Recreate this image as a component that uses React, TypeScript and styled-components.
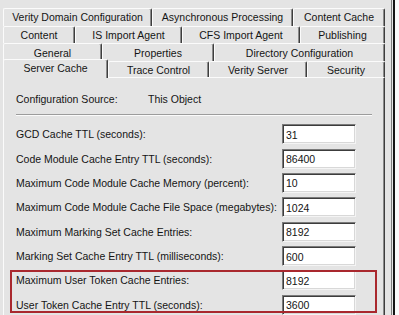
import React from "react";
import styled, { createGlobalStyle } from "styled-components";

const Global = createGlobalStyle`
  html, body { margin: 0; padding: 0; background: #e4e4e4; }
  body { font-family: "Liberation Sans", Arial, sans-serif; font-size: 10.5px; color: #141414; }
  * { box-sizing: border-box; }
`;

const Screen = styled.div`
  width: 399px;
  height: 315px;
  display: flex;
  overflow: hidden;
  background: #e4e4e4;
`;

const Dialog = styled.div`
  width: 391px;
  padding: 8px 0 0 3px;
  display: flex;
  flex-direction: column;
`;

const Frame = styled.div`
  flex: 1;
  background: linear-gradient(to right, #7e7e7e 0 1px, #e6e6e6 1px 2px, #151515 2px 4px, #fbfbfb 4px);
`;

const TabStrip = styled.div`
  width: 382px;
  display: flex;
  flex-direction: column;
`;

const TabRow = styled.div<{ $h: number }>`
  display: flex;
  height: ${(p) => p.$h}px;
  align-items: flex-end;
`;

const Tab = styled.div<{ $w: number; $selected?: boolean }>`
  position: relative;
  flex: 0 0 ${(p) => p.$w}px;
  height: ${(p) => (p.$selected ? "calc(100% + 3px)" : "100%")};
  margin-bottom: ${(p) => (p.$selected ? "-1px" : "0")};
  z-index: ${(p) => (p.$selected ? 2 : 1)};
  display: flex;
  align-items: center;
  justify-content: center;
  padding-bottom: ${(p) => (p.$selected ? "2px" : "0")};
  background: #e4e4e4;
  border-top: 1px solid #fbfbfb;
  border-left: 1px solid #fbfbfb;
  border-right: 1px solid #3e3e3e;
  box-shadow: inset -1px 0 #8a8a8a;
  border-radius: 2px 2px 0 0;
  white-space: nowrap;
  line-height: 12px;
`;

const Panel = styled.div`
  width: 382px;
  flex: 1;
  border-top: 1px solid #fbfbfb;
  border-left: 1px solid #fbfbfb;
  border-right: 1px solid #3e3e3e;
  box-shadow: inset -1px 0 #8a8a8a;
  padding: 15px 12px 0 12px;
  display: flex;
  flex-direction: column;
`;

const SourceRow = styled.div`
  display: grid;
  grid-template-columns: 132px auto;
  line-height: 13px;
`;

const Separator = styled.div`
  width: 356px;
  height: 2px;
  margin: 8px 0 6px 0;
  border-top: 1px solid #9c9c9c;
  border-bottom: 1px solid #fbfbfb;
`;

const Form = styled.div`
  width: 356px;
  display: flex;
  flex-direction: column;
`;

const Field = styled.div`
  display: grid;
  grid-template-columns: 266px 74px;
  height: 24.4px;
  align-items: center;
`;

const Label = styled.span`
  white-space: nowrap;
`;

const Box = styled.input`
  width: 74px;
  height: 20px;
  padding: 1px 0 0 3px;
  font: inherit;
  color: #141414;
  background: #ffffff;
  border-top: 1px solid #7a7a7a;
  border-left: 1px solid #7a7a7a;
  border-right: 1px solid #f4f4f4;
  border-bottom: 1px solid #f4f4f4;
  box-shadow: inset 1px 1px #3c3c3c, inset -1px -1px #d8d8d8;
  outline: none;
`;

const Highlight = styled.div`
  position: relative;
  &::after {
    content: "";
    position: absolute;
    top: 2px;
    bottom: 4px;
    left: -6px;
    right: -5px;
    border: 2px solid #a9282e;
    pointer-events: none;
  }
`;

const tabRows: { h: number; tabs: { label: string; w: number; selected?: boolean }[] }[] = [
  { h: 17.7, tabs: [
    { label: "Verity Domain Configuration", w: 149 },
    { label: "Asynchronous Processing", w: 141 },
    { label: "Content Cache", w: 92 },
  ] },
  { h: 17.7, tabs: [
    { label: "Content", w: 72 },
    { label: "IS Import Agent", w: 107 },
    { label: "CFS Import Agent", w: 118 },
    { label: "Publishing", w: 85 },
  ] },
  { h: 17.7, tabs: [
    { label: "General", w: 99 },
    { label: "Properties", w: 112 },
    { label: "Directory Configuration", w: 171 },
  ] },
  { h: 15.9, tabs: [
    { label: "Server Cache", w: 105, selected: true },
    { label: "Trace Control", w: 101 },
    { label: "Verity Server", w: 98 },
    { label: "Security", w: 78 },
  ] },
];

const fields: [string, string][] = [
  ["GCD Cache TTL (seconds):", "31"],
  ["Code Module Cache Entry TTL (seconds):", "86400"],
  ["Maximum Code Module Cache Memory (percent):", "10"],
  ["Maximum Code Module Cache File Space (megabytes):", "1024"],
  ["Maximum Marking Set Cache Entries:", "8192"],
  ["Marking Set Cache Entry TTL (milliseconds):", "600"],
];

const highlighted: [string, string][] = [
  ["Maximum User Token Cache Entries:", "8192"],
  ["User Token Cache Entry TTL (seconds):", "3600"],
];

const FieldRow = ({ label, value }: { label: string; value: string }) => (
  <Field>
    <Label>{label}</Label>
    <Box readOnly defaultValue={value} />
  </Field>
);

export default function App() {
  return (
    <Screen>
      <Global />
      <Dialog>
        <TabStrip>
          {tabRows.map((row, i) => (
            <TabRow key={i} $h={row.h}>
              {row.tabs.map((t) => (
                <Tab key={t.label} $w={t.w} $selected={t.selected}>
                  {t.label}
                </Tab>
              ))}
            </TabRow>
          ))}
        </TabStrip>
        <Panel>
          <SourceRow>
            <span>Configuration Source:</span>
            <span>This Object</span>
          </SourceRow>
          <Separator />
          <Form>
            {fields.map(([l, v]) => (
              <FieldRow key={l} label={l} value={v} />
            ))}
            <Highlight>
              {highlighted.map(([l, v]) => (
                <FieldRow key={l} label={l} value={v} />
              ))}
            </Highlight>
          </Form>
        </Panel>
      </Dialog>
      <Frame />
    </Screen>
  );
}
